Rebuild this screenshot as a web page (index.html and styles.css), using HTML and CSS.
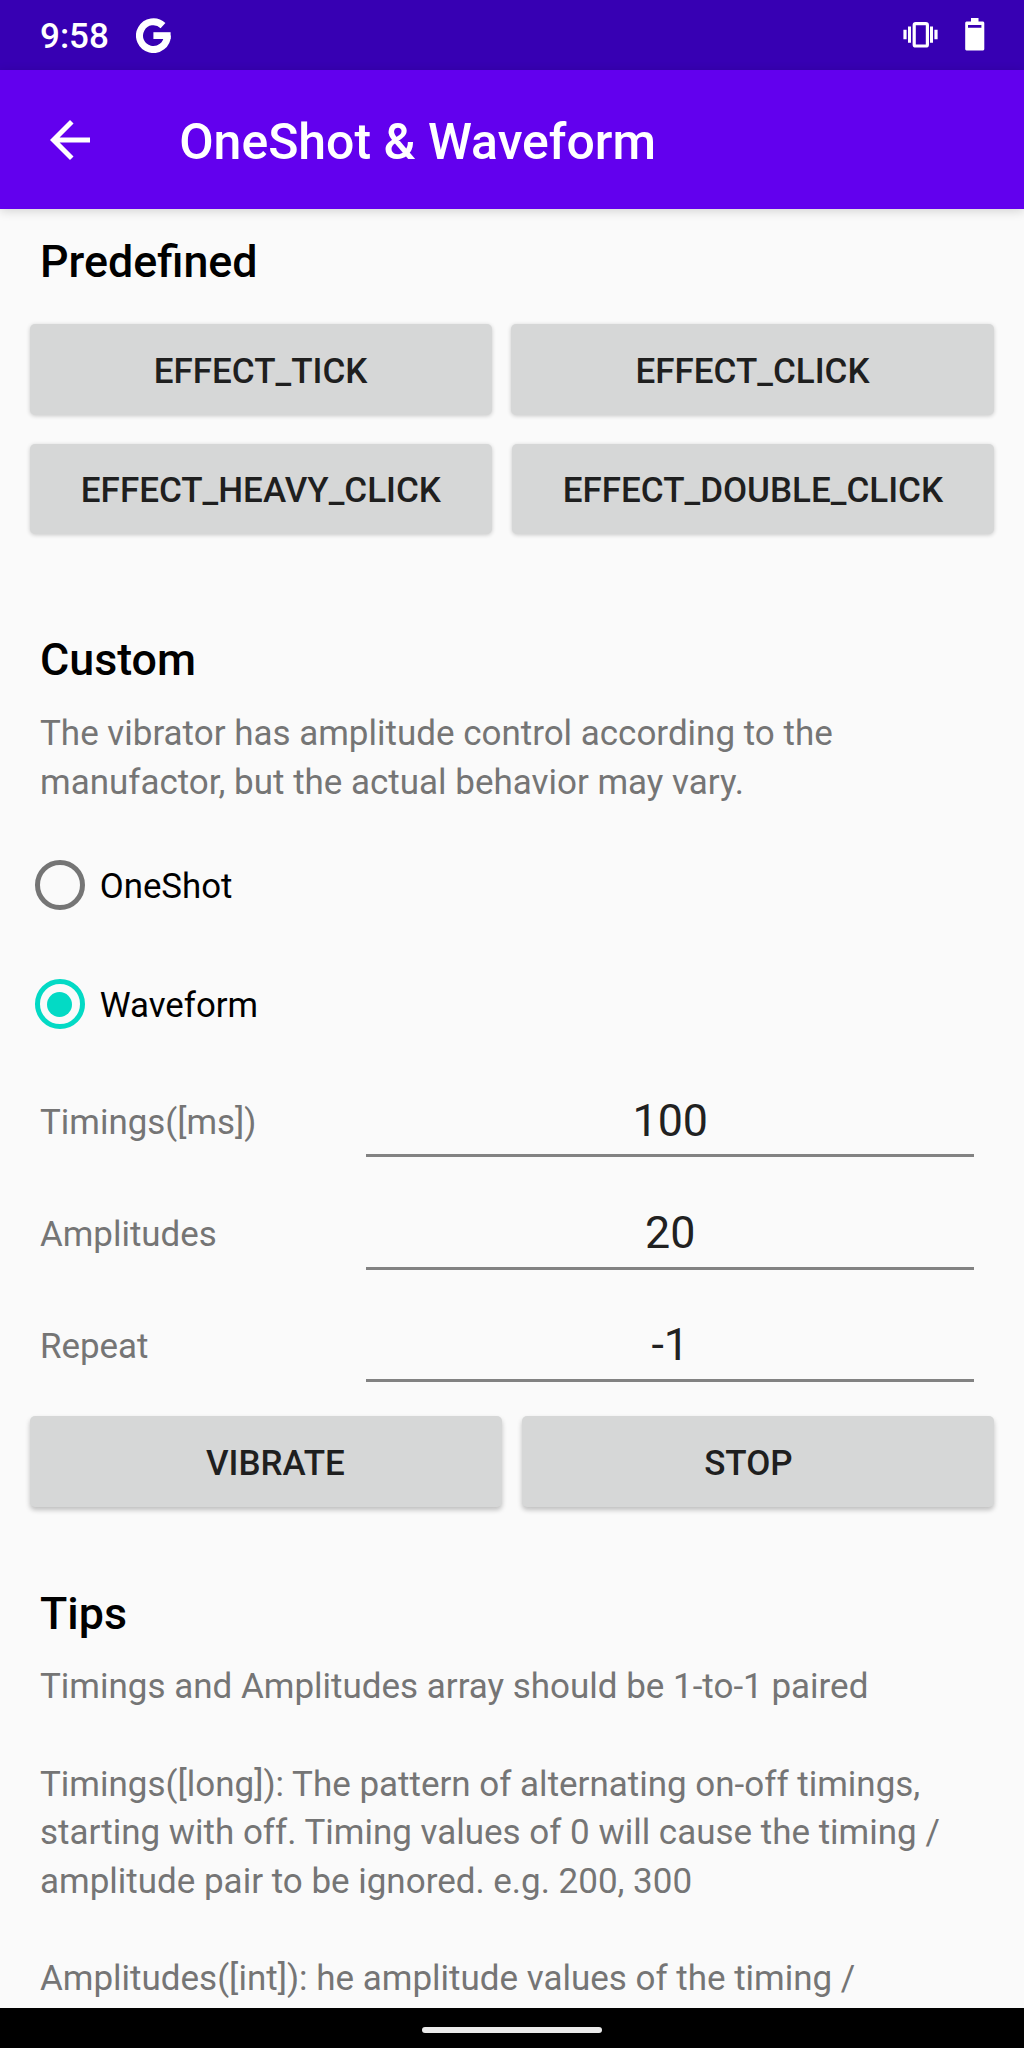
FILE: index.html
```html
<!DOCTYPE html>
<html lang="en">
<head>
<meta charset="utf-8">
<title>OneShot &amp; Waveform</title>
<link rel="stylesheet" href="styles.css">
</head>
<body>
<div class="screen">
  <div class="status-bar">
    <span class="clock">9:58</span>
    <svg class="google" viewBox="0 0 35 35" aria-hidden="true">
      <path d="M27 7.6A13.9 13.9 0 1 0 31.3 17.5" fill="none" stroke="#fff" stroke-width="7"/>
      <path d="M17.4 14.2H34.6V21H17.4Z" fill="#fff"/>
    </svg>
    <span class="spacer"></span>
    <svg class="vibration" viewBox="0 0 36 26" aria-hidden="true">
      <rect x="11.2" y="1.7" width="13.2" height="22.3" rx="1.6" fill="none" stroke="#fff" stroke-width="3.2"/>
      <path d="M0.4 7.7H3.6V17.3H0.4ZM5 4.6H8V20.7H5ZM27 4.6H30V20.7H27ZM31.4 7.7H34.6V17.3H31.4Z" fill="#fff"/>
    </svg>
    <svg class="battery" viewBox="0 0 20 33" aria-hidden="true">
      <path d="M6 0H13.5V3.5H18A1.5 1.5 0 0 1 19.3 5V31A1.5 1.5 0 0 1 18 32.6H1.5A1.5 1.5 0 0 1 0.2 31V5A1.5 1.5 0 0 1 1.5 3.5H6ZM3 7V9.7H16.4V7Z" fill="#fff" fill-rule="evenodd"/>
    </svg>
  </div>
  <header class="app-bar">
    <svg class="back" viewBox="4 4 16 16" aria-hidden="true">
      <path d="M20 11H7.83l5.59-5.59L12 4l-8 8 8 8 1.41-1.41L7.83 13H20v-2z" fill="#fff"/>
    </svg>
    <h1 class="title">OneShot &amp; Waveform</h1>
  </header>
  <main class="content">
    <h2 class="heading">Predefined</h2>
    <div class="effects">
      <div class="button-row row-short">
        <button class="button">EFFECT_TICK</button>
        <button class="button">EFFECT_CLICK</button>
      </div>
      <div class="button-row row-long">
        <button class="button">EFFECT_HEAVY_CLICK</button>
        <button class="button">EFFECT_DOUBLE_CLICK</button>
      </div>
    </div>
    <h2 class="heading heading-custom">Custom</h2>
    <p class="text intro">The vibrator has amplitude control according to the<br>manufactor, but the actual behavior may vary.</p>
    <div class="radio"><span class="ring"></span><span class="choice">OneShot</span></div>
    <div class="radio"><span class="ring checked"></span><span class="choice">Waveform</span></div>
    <div class="fields">
      <div class="field"><span class="label">Timings([ms])</span><span class="value">100</span></div>
      <div class="field"><span class="label">Amplitudes</span><span class="value">20</span></div>
      <div class="field"><span class="label">Repeat</span><span class="value">-1</span></div>
    </div>
    <div class="button-row actions">
      <button class="button raised vibrate">VIBRATE</button>
      <button class="button raised stop">STOP</button>
    </div>
    <h2 class="heading heading-tips">Tips</h2>
    <div class="text tips">
      <p>Timings and Amplitudes array should be 1-to-1 paired</p>
      <p>Timings([long]): The pattern of alternating on-off timings,<br>starting with off. Timing values of 0 will cause the timing /<br>amplitude pair to be ignored. e.g. 200, 300</p>
      <p>Amplitudes([int]): he amplitude values of the timing /</p>
    </div>
  </main>
  <div class="nav-bar"><span class="handle"></span></div>
</div>
</body>
</html>
```

FILE: styles.css
```css
* {
  box-sizing: border-box;
}

body {
  margin: 0;
  background: #fafafa;
  font-family: Roboto, sans-serif;
}

h1, h2, p {
  margin: 0;
  font-weight: 400;
}

svg {
  display: block;
  flex: none;
}

.screen {
  display: flex;
  flex-direction: column;
  width: 1024px;
  height: 2048px;
  overflow: hidden;
  background: #fafafa;
}

.status-bar {
  display: flex;
  flex: none;
  align-items: flex-start;
  height: 70px;
  padding: 0 39px 0 40px;
  background: #3700b3;
  color: #fff;
}

.clock {
  width: 96px;
  padding-top: 16px;
  font-size: 35px;
  font-weight: 500;
  line-height: 41px;
}

.google {
  width: 35px;
  height: 35px;
  margin-top: 18px;
}

.spacer {
  flex: 1;
}

.vibration {
  width: 36px;
  height: 26px;
  margin: 21.5px 26px 0 0;
}

.battery {
  width: 20px;
  height: 33px;
  margin-top: 18px;
}

.app-bar {
  position: relative;
  display: flex;
  flex: none;
  align-items: center;
  height: 139px;
  padding-left: 50px;
  background: #6200ee;
  box-shadow: 0 2px 10px rgba(0, 0, 0, 0.16);
  color: #fff;
}

.back {
  width: 40px;
  height: 40px;
  margin-right: 89.2px;
}

.title {
  padding-top: 4px;
  font-size: 49.95px;
  font-weight: 500;
  line-height: 58px;
  white-space: nowrap;
}

.content {
  flex: 1;
  min-height: 0;
  padding-top: 27px;
  overflow: hidden;
}

.heading {
  padding-left: 40px;
  font-size: 44.8px;
  font-weight: 500;
  line-height: 52px;
  color: #000;
}

.effects {
  display: grid;
  gap: 29px;
  margin-top: 36px;
}

.button-row {
  display: grid;
  padding: 0 30px 0 29.6px;
}

.row-short {
  grid-template-columns: 462px 483px;
  gap: 19.4px;
}

.row-long {
  grid-template-columns: 462.6px 482.2px;
  gap: 19.6px;
}

.button {
  height: 90.5px;
  padding: 4px 0 0;
  border: 0;
  border-radius: 5px;
  background: #d6d7d7;
  box-shadow: 0 1px 4px rgba(0, 0, 0, 0.2);
  color: #1f1f1f;
  font: 500 35px/41px Roboto, sans-serif;
}

.heading-custom {
  margin-top: 100px;
}

.text {
  padding-left: 40px;
  color: #757575;
  font-size: 34.98px;
  line-height: 48.4px;
  white-space: nowrap;
}

.intro {
  margin-top: 23.2px;
  line-height: 49.2px;
}

.radio {
  display: flex;
  align-items: center;
  gap: 15px;
  height: 119.5px;
  padding-left: 34.7px;
  color: #000;
  font-size: 34.84px;
  line-height: 41px;
}

.choice {
  padding-top: 3px;
}

.intro + .radio {
  margin-top: 17.4px;
}

.ring {
  display: flex;
  align-items: center;
  justify-content: center;
  width: 50px;
  height: 50px;
  border: 5px solid #757575;
  border-radius: 50%;
}

.checked {
  border-color: #03dac5;
}

.checked::after {
  content: "";
  width: 25px;
  height: 25px;
  border-radius: 50%;
  background: #03dac5;
}

.fields {
  display: grid;
  grid-auto-rows: 112.4px;
  margin-top: -19.2px;
}

.field {
  display: flex;
  align-items: flex-end;
  padding-left: 40px;
}

.label {
  width: 325.5px;
  padding-bottom: 14.5px;
  color: #757575;
  font-size: 34.9px;
  line-height: 41px;
}

.value {
  width: 608px;
  padding: 0 0 7.5px 1.5px;
  border-bottom: 3px solid #828282;
  color: #212121;
  font-size: 44.8px;
  line-height: 52px;
  text-align: center;
}

.actions {
  grid-template-columns: 472.2px 471.8px;
  gap: 20px;
  margin-top: 34.4px;
  padding-left: 29.8px;
}

.raised {
  box-shadow: 0 3px 5px rgba(0, 0, 0, 0.24);
}

.vibrate {
  padding-left: 19px;
}

.stop {
  padding-right: 19px;
}

.heading-tips {
  margin-top: 81px;
}

.tips {
  margin-top: 23px;
}

.tips p + p {
  margin-top: 48.4px;
}

.tips p:nth-child(2) {
  margin-top: 49.8px;
}

.nav-bar {
  display: flex;
  flex: none;
  align-items: center;
  justify-content: center;
  height: 40px;
  padding-top: 4px;
  background: #000;
}

.handle {
  width: 180px;
  height: 6px;
  border-radius: 3px;
  background: #ebebeb;
}
```
